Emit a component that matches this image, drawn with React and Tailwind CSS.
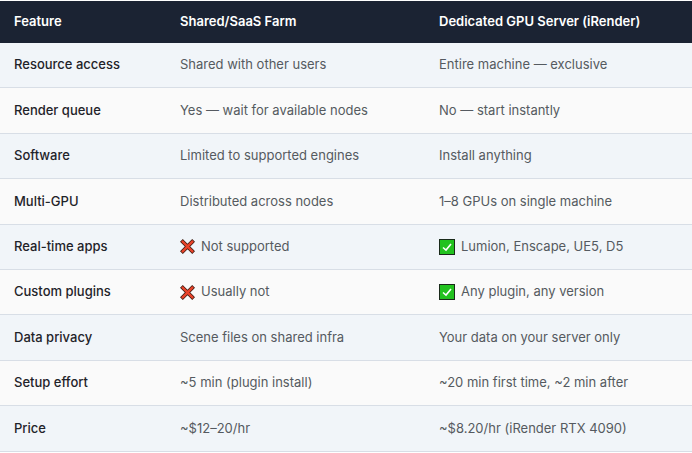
const rows = [
  ["Resource access", "Shared with other users", "Entire machine — exclusive"],
  ["Render queue", "Yes — wait for available nodes", "No — start instantly"],
  ["Software", "Limited to supported engines", "Install anything"],
  ["Multi-GPU", "Distributed across nodes", "1–8 GPUs on single machine"],
  ["Real-time apps", ["x", "Not supported"], ["c", "Lumion, Enscape, UE5, D5"]],
  ["Custom plugins", ["x", "Usually not"], ["c", "Any plugin, any version"]],
  ["Data privacy", "Scene files on shared infra", "Your data on your server only"],
  ["Setup effort", "~5 min (plugin install)", "~20 min first time, ~2 min after"],
  ["Price", "~$12–20/hr", "~$8.20/hr (iRender RTX 4090)"],
];

function X() {
  return (
    <svg width="15" height="15" viewBox="0 0 16 16" className="mr-[6px] shrink-0">
      <path d="M3 3 L13 13 M13 3 L3 13" stroke="#3a1a10" strokeWidth="4.2" strokeLinecap="square" />
      <path d="M3 3 L13 13 M13 3 L3 13" stroke="#e8432a" strokeWidth="2.6" strokeLinecap="square" />
    </svg>
  );
}
function C() {
  return (
    <svg width="16" height="16" viewBox="0 0 16 16" className="mr-[6px] shrink-0">
      <rect x="0.5" y="0.5" width="15" height="15" fill="#22c21f" stroke="#1a2a1a" />
      <path d="M4 8.5 L7 11 L12 5" stroke="#fff" strokeWidth="1.6" fill="none" />
    </svg>
  );
}

function Cell({ v }) {
  if (Array.isArray(v)) {
    return (
      <div className="flex items-center">
        {v[0] === "x" ? <X /> : <C />}
        <span>{v[1]}</span>
      </div>
    );
  }
  return <span>{v}</span>;
}

export default function App() {
  return (
    <div className="w-[692px] h-[453px] bg-white pt-[1px]" style={{ fontFamily: "Inter, 'Noto Sans', sans-serif" }}>
      <div className="grid grid-cols-[166px_259px_1fr] h-[42px] bg-[#1b2333] text-white text-[13px] font-semibold items-center">
        <div className="pl-[14px]">Feature</div>
        <div className="pl-[14px]">Shared/SaaS Farm</div>
        <div className="pl-[14px]">Dedicated GPU Server (iRender)</div>
      </div>
      {rows.map((r, i) => (
        <div
          key={i}
          className={`grid grid-cols-[166px_259px_1fr] h-[45.4px] items-center border-b border-[#d8dee6] text-[13px] ${i % 2 === 0 ? "bg-[#f1f5f9]" : "bg-[#fafafa]"}`}
        >
          <div className="pl-[14px] text-[#1f2329] font-medium">{r[0]}</div>
          <div className="pl-[14px] text-[#555a60]"><Cell v={r[1]} /></div>
          <div className="pl-[14px] text-[#555a60]"><Cell v={r[2]} /></div>
        </div>
      ))}
    </div>
  );
}
